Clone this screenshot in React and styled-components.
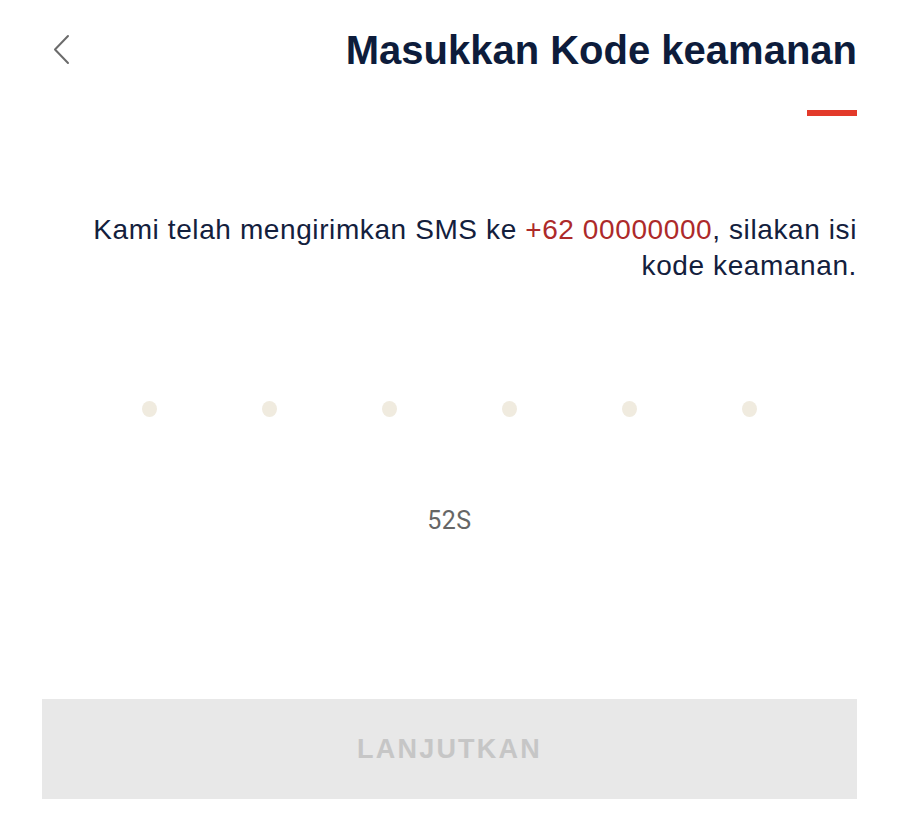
import React from 'react';
import styled, { createGlobalStyle } from 'styled-components';

const GlobalStyle = createGlobalStyle`
  body {
    margin: 0;
    background: #fff;
    font-family: "Liberation Sans", Arial, sans-serif;
  }
`;

const Page = styled.div`
  width: 900px;
  height: 837px;
  box-sizing: border-box;
  padding: 0 43px 0 42px;
  display: flex;
  flex-direction: column;
`;

const Header = styled.div`
  display: flex;
  align-items: center;
  justify-content: space-between;
  padding-top: 27px;
  height: 46px;
`;

const BackButton = styled.button`
  border: none;
  background: none;
  padding: 0;
  margin-left: 9px;
  margin-top: -2px;
  width: 22px;
  height: 32px;
  display: flex;
  align-items: center;
  cursor: pointer;
`;

const Title = styled.h1`
  margin: 0;
  font-size: 40px;
  line-height: 46px;
  font-weight: 700;
  color: #0d1c3b;
`;

const Accent = styled.div`
  align-self: flex-end;
  width: 50px;
  height: 6px;
  background: #e33a2a;
  margin-top: 37px;
`;

const Message = styled.p`
  margin: 96px 0 0;
  text-align: right;
  font-size: 28px;
  line-height: 36px;
  letter-spacing: 0.6px;
  color: #13203d;
`;

const Phone = styled.span`
  color: #ad2a2a;
`;

const Dots = styled.div`
  display: flex;
  justify-content: space-around;
  width: 720px;
  align-self: center;
  margin-top: 117px;
`;

const Dot = styled.span`
  width: 15px;
  height: 16px;
  border-radius: 50%;
  background: ${p => (p.filled ? '#0d1c3b' : '#f0ebdf')};
`;

const Timer = styled.div`
  margin-top: 89px;
  text-align: center;
  font-family: Roboto, "Liberation Sans", sans-serif;
  font-size: 25px;
  color: #666;
  letter-spacing: 0.5px;
`;

const SubmitButton = styled.button`
  margin-top: 164px;
  width: 100%;
  height: 100px;
  border: none;
  background: #e8e8e8;
  color: #c6c6c6;
  font-family: "Liberation Sans", Arial, sans-serif;
  font-size: 27px;
  font-weight: 700;
  letter-spacing: 2.2px;
  cursor: default;
`;

const ChevronLeft = () => (
  <svg width="22" height="32" viewBox="0 0 22 32" fill="none">
    <path d="M17 3 L4 16.5 L17 30" stroke="#6b6b6b" strokeWidth="2" strokeLinecap="round" strokeLinejoin="round" />
  </svg>
);

const App = () => {
  const code = '';
  return (
    <>
      <GlobalStyle />
      <Page>
        <Header>
          <BackButton aria-label="Kembali">
            <ChevronLeft />
          </BackButton>
          <Title>Masukkan Kode keamanan</Title>
        </Header>
        <Accent />
        <Message>
          Kami telah mengirimkan SMS ke <Phone>+62 00000000</Phone>, silakan isi kode keamanan.
        </Message>
        <Dots>
          {[0, 1, 2, 3, 4, 5].map(i => (
            <Dot key={i} filled={i < code.length} />
          ))}
        </Dots>
        <Timer>52S</Timer>
        <SubmitButton disabled>LANJUTKAN</SubmitButton>
      </Page>
    </>
  );
};

export default App;
